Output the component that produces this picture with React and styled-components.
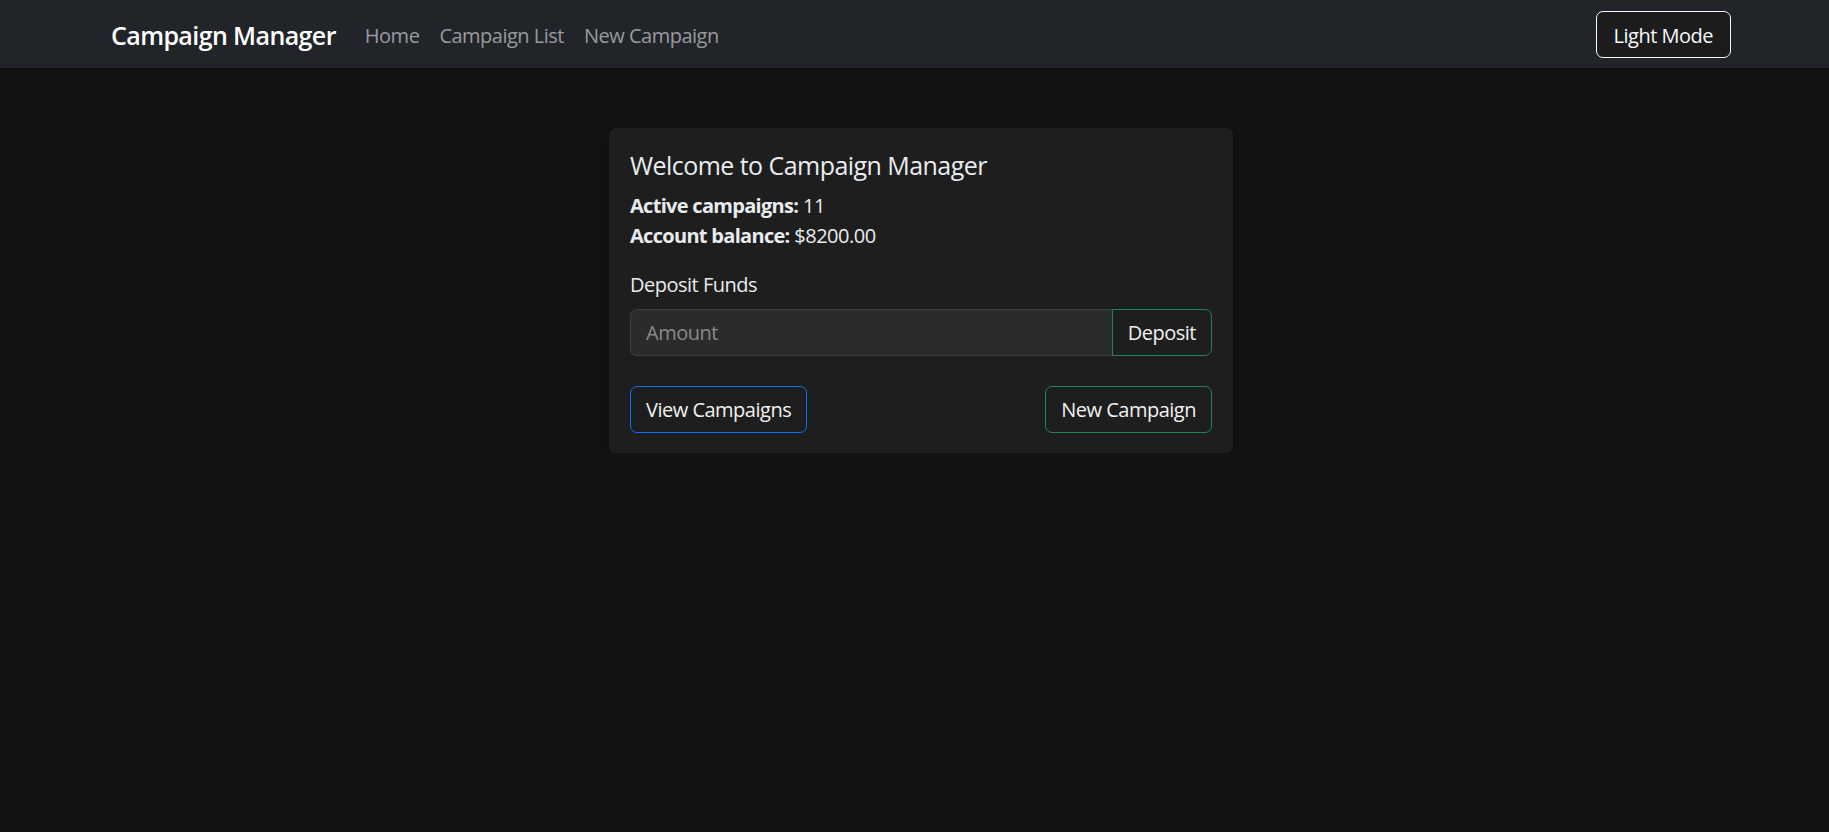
import React, { useState } from "react";
import styled, { createGlobalStyle } from "styled-components";

const GlobalStyle = createGlobalStyle`
  * { box-sizing: border-box; }
  body {
    margin: 0;
    background: #121212;
    color: #dee2e6;
    font-family: "Open Sans", "Noto Sans", sans-serif;
    font-size: 20px;
    line-height: 1.5;
    letter-spacing: -0.5px;
  }
`;

const Navbar = styled.nav`
  height: 68px;
  background: #212529;
  display: flex;
  align-items: center;
  justify-content: space-between;
  padding: 0 98px 0 111px;
`;

const NavLeft = styled.div`
  display: flex;
  align-items: center;
  padding-top: 4px;
`;

const Brand = styled.a`
  font-size: 25px;
  font-weight: 600;
  color: #fff;
  margin-right: 19px;
  text-decoration: none;
  letter-spacing: -0.6px;
`;

const NavLink = styled.a`
  color: rgba(255, 255, 255, 0.55);
  padding: 0 10px;
  font-size: 20px;
  text-decoration: none;
  cursor: pointer;
`;

const Main = styled.main`
  display: flex;
  justify-content: center;
  padding: 60px 0 0 13px;
`;

const Card = styled.div`
  width: 624px;
  background: #1e1e1e;
  border-radius: 7px;
  padding: 22px 21px 20px;
  box-shadow: 0 2px 6px rgba(0, 0, 0, 0.3);
`;

const Title = styled.h5`
  margin: 0 0 11px;
  font-size: 25px;
  font-weight: 400;
  line-height: 1.2;
  color: #e9ecef;
  letter-spacing: -0.55px;
`;

const Stat = styled.p`
  margin: 0;
  color: #e9ecef;

  strong {
    font-weight: 700;
    letter-spacing: -0.7px;
  }
`;

const Label = styled.label`
  display: block;
  margin: 19px 0 9px;
  color: #e9ecef;
`;

const InputGroup = styled.div`
  display: flex;
  height: 47px;
`;

const Input = styled.input`
  flex: 1;
  min-width: 0;
  background: #2b2b2b;
  border: 1px solid #3d3d3d;
  border-right: none;
  border-radius: 7px 0 0 7px;
  padding: 0 15px;
  font: inherit;
  letter-spacing: -0.5px;
  color: #e9ecef;
  outline: none;

  &::placeholder {
    color: #8a8a8a;
  }
`;

const OutlineButton = styled.button`
  background: transparent;
  border: 1.25px solid ${(p) => p.$color};
  border-radius: ${(p) => (p.$attached ? "0 7px 7px 0" : "7px")};
  color: #f1f1f1;
  font: inherit;
  letter-spacing: -0.5px;
  height: 47px;
  padding: 0 15px;
  cursor: pointer;
  white-space: nowrap;
`;

const Actions = styled.div`
  display: flex;
  justify-content: space-between;
  margin-top: 30px;
`;

const ModeButton = styled.button`
  background: #1c1c1d;
  border: 1.25px solid #f8f9fa;
  border-radius: 7px;
  color: #f8f9fa;
  font: inherit;
  letter-spacing: -0.5px;
  height: 47px;
  padding: 3px 17px 0;
  cursor: pointer;
`;

export default function App() {
  const [amount, setAmount] = useState("");
  return (
    <>
      <GlobalStyle />
      <Navbar>
        <NavLeft>
          <Brand>Campaign Manager</Brand>
          <NavLink>Home</NavLink>
          <NavLink>Campaign List</NavLink>
          <NavLink>New Campaign</NavLink>
        </NavLeft>
        <ModeButton>Light Mode</ModeButton>
      </Navbar>
      <Main>
        <Card>
          <Title>Welcome to Campaign Manager</Title>
          <Stat>
            <strong>Active campaigns:</strong> 11
          </Stat>
          <Stat>
            <strong>Account balance:</strong> $8200.00
          </Stat>
          <Label>Deposit Funds</Label>
          <InputGroup>
            <Input
              placeholder="Amount"
              value={amount}
              onChange={(e) => setAmount(e.target.value)}
            />
            <OutlineButton $color="#198754" $attached>
              Deposit
            </OutlineButton>
          </InputGroup>
          <Actions>
            <OutlineButton $color="#0d6efd">View Campaigns</OutlineButton>
            <OutlineButton $color="#198754">New Campaign</OutlineButton>
          </Actions>
        </Card>
      </Main>
    </>
  );
}
